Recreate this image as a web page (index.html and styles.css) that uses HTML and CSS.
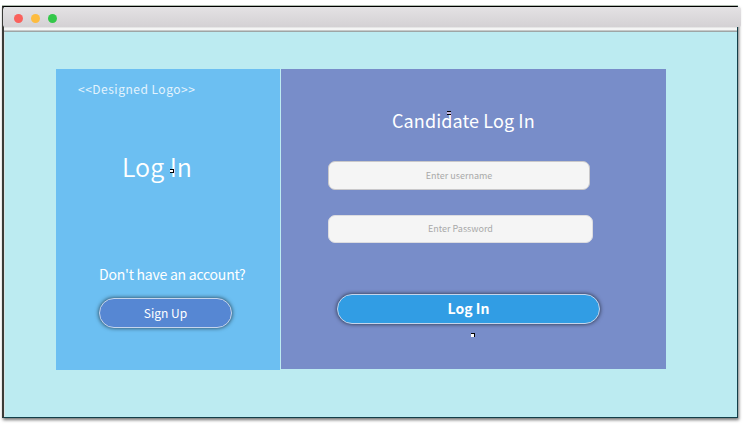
FILE: index.html
```
<!DOCTYPE html>
<html lang="en">
<head>
<meta charset="utf-8">
<title>Candidate Log In</title>
<link rel="stylesheet" href="styles.css">
</head>
<body>
<div class="window">
  <header class="titlebar">
    <span class="dot red"></span><span class="dot yellow"></span><span class="dot green"></span>
  </header>
  <div class="strip"></div>
  <main class="content">
    <section class="side">
      <div class="logo"><span>&lt;&lt;Designed Logo&gt;&gt;</span></div>
      <h1><span>Log In</span><i class="handle handle-side"></i></h1>
      <p class="question"><span>Don't have an account?</span></p>
      <button class="signup"><span>Sign Up</span></button>
    </section>
    <form class="login">
      <h2><i class="handle handle-title"></i><span>Candidate Log In</span></h2>
      <div class="field username"><span>Enter username</span></div>
      <div class="field password"><span>Enter Password</span></div>
      <button class="submit" type="button"><span>Log In</span></button>
      <i class="handle handle-form"></i>
    </form>
  </main>
</div>
</body>
</html>
```

FILE: styles.css
```
* { box-sizing: border-box; }
body {
  margin: 0;
  padding: 6px 0 0 2px;
  height: 425px;
  overflow: hidden;
  background: #fff;
  font-family: "Noto Sans CJK SC", "Noto Sans", sans-serif;
  color: #fff;
}
.window {
  width: 736px;
  height: 412px;
  border: solid #123f49;
  border-width: 1px 1px 1px 2px;
  border-top-color: #000;
  border-left-color: #3b3b38;
  background: #bcebf1;
  box-shadow: 1px 2px 3px rgba(0, 0, 0, .55), 0 -1px 0 #b5c2b5;
}
.titlebar {
  display: flex;
  align-items: center;
  gap: 8px;
  width: 738px;
  height: 20px;
  margin-left: -1px;
  padding: 3px 0 0 11px;
  border-radius: 3px 3px 2px 2px;
  background: linear-gradient(#e4e2e4, #d4d1d4);
}
.dot { width: 9px; height: 9px; border-radius: 50%; }
.red { background: #fa615c; }
.yellow { background: #fdbc40; }
.green { background: #34c84a; }
.strip {
  height: 5px;
  background: linear-gradient(#e6e6e6 0 1px, #f5f5f5 1px 3px, #c6c9c9 3px 4px, #9ea5a5 4px);
}
.content {
  display: flex;
  align-items: flex-start;
  gap: 1px;
  height: 385px;
  padding: 37px 0 0 51px;
  border-left: 1px solid #d9e4e3;
}
span { white-space: nowrap; }
.side { width: 224px; height: 301px; background: #6cbff2; }
.login { width: 385px; height: 300px; background: #788dc9; }
h1, h2, p { margin: 0; font-weight: 400; }
.logo {
  padding: 10px 0 0 22px;
  font-size: 12px;
  line-height: 20px;
  letter-spacing: .5px;
  color: #e3f3fd;
}
h1 {
  position: relative;
  margin-top: 47px;
  padding-left: 66px;
  font-size: 25px;
  font-weight: 350;
  line-height: 41px;
}
.question {
  margin-top: 76px;
  padding-left: 43px;
  font-size: 14px;
  line-height: 22px;
  letter-spacing: -.23px;
}
button {
  display: flex;
  align-items: center;
  justify-content: center;
  padding: 0 0 2px;
  border: 1px solid #c5d5ec;
  border-radius: 15px;
  color: #fff;
  font-family: inherit;
  box-shadow: 0 0 4px rgba(0, 0, 0, .7);
}
.signup {
  width: 133px;
  height: 30px;
  margin: 13px 0 0 43px;
  background: #5687d3;
  font-size: 12px;
}
h2 {
  position: relative;
  padding: 36px 0 1px 111px;
  font-size: 18px;
  line-height: 30px;
  letter-spacing: .1px;
}
.field {
  display: flex;
  align-items: center;
  justify-content: center;
  border: 1px solid #c9c8ca;
  border-radius: 7px;
  background: #f5f5f5;
  color: #a9a9a9;
  font-size: 9px;
  line-height: 14px;
}
.username { width: 262px; height: 29px; margin: 25px 0 0 47px; }
.password { width: 265px; height: 28px; margin: 25px 0 0 47px; border-color: #dcdce0; }
.submit {
  width: 263px;
  height: 30px;
  margin: 50.5px 0 0 56px;
  background: #319de4;
  font-size: 14px;
  font-weight: 700;
}
.handle {
  display: block;
  width: 4px;
  height: 4px;
  background: #fff;
  border: 1px solid #000;
}
.handle-side { position: absolute; left: 114px; top: 23px; border-left: 0; }
.handle-title { position: absolute; left: 166px; top: 42px; border-width: 1px 0; background: #c8b9df; }
.handle-form { margin: 9.5px 0 0 190px; border-width: 1px 1px 0 0; }
```
